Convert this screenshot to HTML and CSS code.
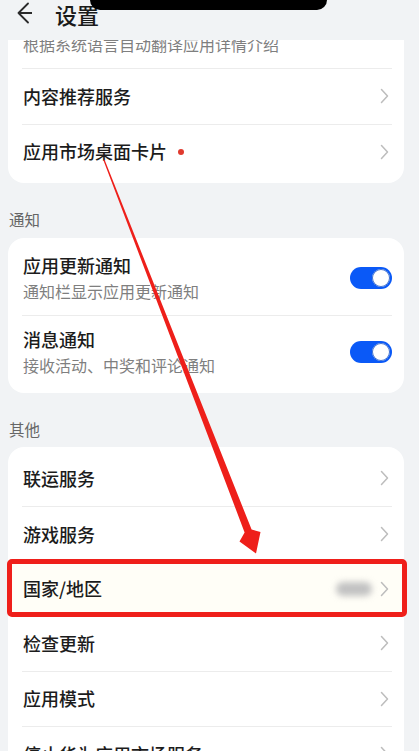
FILE: index.html
```html
<!DOCTYPE html>
<html lang="zh-CN">
<head>
<meta charset="utf-8">
<title>设置</title>
<link rel="stylesheet" href="styles.css">
</head>
<body>
<div class="notch"></div>
<header class="header">
  <svg class="back" width="24" height="24" viewBox="0 0 24 24"><path d="M22 3.5 L12.5 13 L22 22.5 M12.5 13 H32" fill="none" stroke="#2a2a2a" stroke-width="1.8" stroke-linecap="round" stroke-linejoin="round" transform="translate(-2,0)"/></svg>
  <h1 class="title">设置</h1>
</header>
<main class="main">
  <div class="content">
    <section class="card card-first">
      <div class="row row-two">
        <div class="texts">
          <div class="row-title">自动翻译</div>
          <div class="row-sub">根据系统语言自动翻译应用详情介绍</div>
        </div>
      </div>
      <div class="sep"></div>
      <div class="row"><span class="row-title">内容推荐服务</span><svg class="chev" width="9" height="16" viewBox="0 0 9 16"><path d="M1.5 1.5 L7.5 8 L1.5 14.5" fill="none" stroke="#bdbdbd" stroke-width="1.5" stroke-linecap="round" stroke-linejoin="round"/></svg></div>
      <div class="sep"></div>
      <div class="row"><span class="row-title">应用市场桌面卡片</span><span class="dot"></span><svg class="chev" width="9" height="16" viewBox="0 0 9 16"><path d="M1.5 1.5 L7.5 8 L1.5 14.5" fill="none" stroke="#bdbdbd" stroke-width="1.5" stroke-linecap="round" stroke-linejoin="round"/></svg></div>
    </section>

    <div class="label">通知</div>
    <section class="card">
      <div class="row row-two">
        <div class="texts">
          <div class="row-title">应用更新通知</div>
          <div class="row-sub">通知栏显示应用更新通知</div>
        </div>
        <span class="toggle"><span class="knob"></span></span>
      </div>
      <div class="sep"></div>
      <div class="row row-two">
        <div class="texts">
          <div class="row-title">消息通知</div>
          <div class="row-sub">接收活动、中奖和评论通知</div>
        </div>
        <span class="toggle"><span class="knob"></span></span>
      </div>
    </section>

    <div class="label">其他</div>
    <section class="card">
      <div class="row"><span class="row-title">联运服务</span><svg class="chev" width="9" height="16" viewBox="0 0 9 16"><path d="M1.5 1.5 L7.5 8 L1.5 14.5" fill="none" stroke="#bdbdbd" stroke-width="1.5" stroke-linecap="round" stroke-linejoin="round"/></svg></div>
      <div class="sep"></div>
      <div class="row"><span class="row-title">游戏服务</span><svg class="chev" width="9" height="16" viewBox="0 0 9 16"><path d="M1.5 1.5 L7.5 8 L1.5 14.5" fill="none" stroke="#bdbdbd" stroke-width="1.5" stroke-linecap="round" stroke-linejoin="round"/></svg></div>
      <div class="row row-marked"><span class="row-title">国家/地区</span><span class="blur"></span><svg class="chev chev-tight" width="9" height="16" viewBox="0 0 9 16"><path d="M1.5 1.5 L7.5 8 L1.5 14.5" fill="none" stroke="#bdbdbd" stroke-width="1.5" stroke-linecap="round" stroke-linejoin="round"/></svg><span class="highlight"></span></div>
      <div class="row"><span class="row-title">检查更新</span><svg class="chev" width="9" height="16" viewBox="0 0 9 16"><path d="M1.5 1.5 L7.5 8 L1.5 14.5" fill="none" stroke="#bdbdbd" stroke-width="1.5" stroke-linecap="round" stroke-linejoin="round"/></svg></div>
      <div class="sep"></div>
      <div class="row"><span class="row-title">应用模式</span><svg class="chev" width="9" height="16" viewBox="0 0 9 16"><path d="M1.5 1.5 L7.5 8 L1.5 14.5" fill="none" stroke="#bdbdbd" stroke-width="1.5" stroke-linecap="round" stroke-linejoin="round"/></svg></div>
      <div class="sep"></div>
      <div class="row"><span class="row-title">停止华为应用市场服务</span><svg class="chev" width="9" height="16" viewBox="0 0 9 16"><path d="M1.5 1.5 L7.5 8 L1.5 14.5" fill="none" stroke="#bdbdbd" stroke-width="1.5" stroke-linecap="round" stroke-linejoin="round"/></svg></div>
    </section>
  </div>
</main>
<svg class="arrow" width="419" height="751" viewBox="0 0 419 751">
  <polygon points="103.4,160.3 104.6,159.7 251.6,529.6 260.5,532 256,553.5 239.5,541.5 244.6,532.4" fill="#ee1f1a"/>
</svg>
</body>
</html>
```

FILE: styles.css
```css
* { box-sizing: border-box; }
html, body { margin: 0; padding: 0; }
body {
  width: 419px;
  height: 751px;
  overflow: hidden;
  background: #f1f3f5;
  font-family: "Noto Sans CJK SC", "Noto Sans", sans-serif;
  color: #1c1c1c;
  position: relative;
}
.notch {
  position: absolute;
  left: 90px;
  top: 0;
  width: 237px;
  height: 10px;
  background: #000;
  border-radius: 0 0 14px 14px;
  z-index: 5;
}
.header {
  height: 40px;
  display: flex;
  align-items: flex-start;
  padding: 0 0 0 8px;
  position: relative;
  z-index: 2;
  background: #f1f3f5;
}
.back { margin-top: 0; flex: none; }
.title {
  margin: -1px 0 0 23px;
  font-size: 22px;
  line-height: 30px;
  font-weight: 500;
  color: #1a1a1a;
}
.main {
  height: 711px;
  overflow: hidden;
}
.content { display: flex; flex-direction: column; }
.card {
  background: #fff;
  border-radius: 16px;
  margin: 0 15px 0 8px;
  padding: 4px 0;
}
.card-first { margin-top: -50px; }
.row {
  height: 54.6px;
  display: flex;
  align-items: center;
  padding: 0 15px;
  position: relative;
}
.card-first .row-two { height: 74px; }
.row-two { height: 73px; padding-right: 12px; }
.texts { flex: 1; display: flex; flex-direction: column; gap: 4px; }
.row-title {
  font-size: 18px;
  line-height: 23px;
  font-weight: 500;
  color: #1c1c1c;
  white-space: nowrap;
}
.row > .row-title { flex: none; }
.row-sub {
  font-size: 16px;
  line-height: 21px;
  color: #7f7f7f;
  white-space: nowrap;
}
.sep {
  height: 1px;
  background: #ececec;
  margin: 0 12px 0 14px;
}
.chev { margin-left: auto; flex: none; }
.chev-tight { margin-left: 8px; }
.dot {
  width: 6px;
  height: 6px;
  border-radius: 50%;
  background: #e03a2e;
  margin-left: 11px;
  flex: none;
}
.label {
  padding: 27px 0 8.5px 9px;
  font-size: 15.5px;
  line-height: 19px;
  color: #666;
}
.toggle {
  width: 42px;
  height: 22px;
  border-radius: 11px;
  background: #0a59f7;
  position: relative;
  flex: none;
}
.knob {
  position: absolute;
  right: 2px;
  top: 2px;
  width: 18px;
  height: 18px;
  border-radius: 50%;
  background: #fff;
  box-shadow: 0 0 0 1px #3c6fd0 inset;
}
.row-marked { background: #fffef7; }
.blur {
  margin-left: auto;
  width: 36px;
  height: 14px;
  border-radius: 7px;
  background: #c2c2c2;
  filter: blur(3px);
  flex: none;
}
.highlight {
  position: absolute;
  left: -1px;
  right: -3px;
  top: -2px;
  bottom: -1px;
  border: 5px solid #ef1f1a;
  border-radius: 5px;
  z-index: 3;
}
.arrow {
  position: absolute;
  left: 0;
  top: 0;
  z-index: 4;
  pointer-events: none;
}
```
